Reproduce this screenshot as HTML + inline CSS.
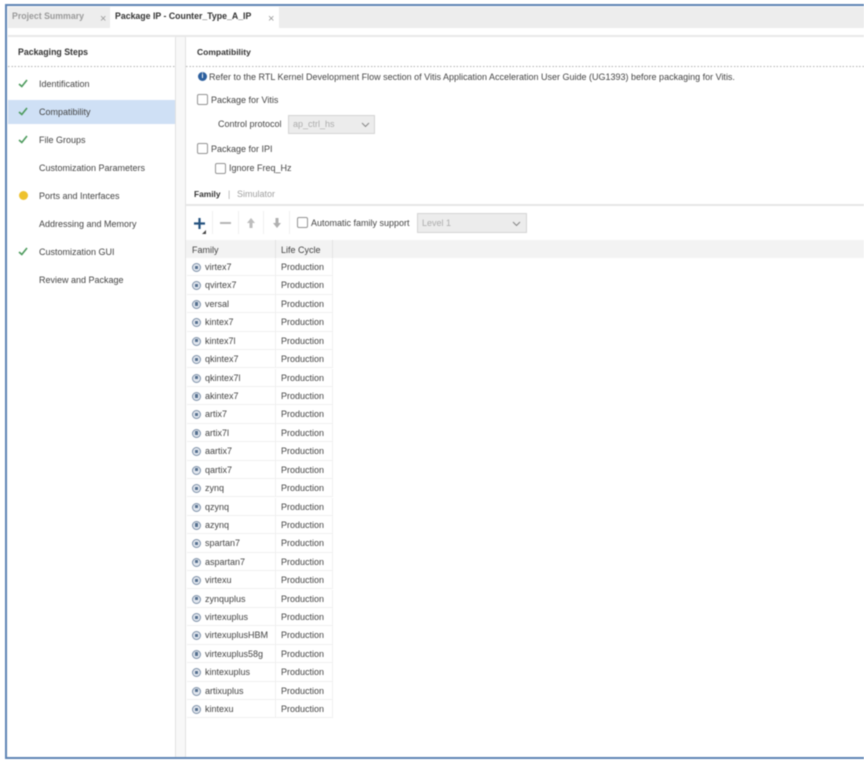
<!DOCTYPE html>
<html><head><meta charset="utf-8">
<style>
html,body{margin:0;padding:0;background:#fff;}
#r{position:relative;width:864px;height:768px;overflow:hidden;background:#fff;font-family:"Liberation Sans",sans-serif;font-size:9px;color:#444;filter:blur(0.42px);}
#r div{position:absolute;white-space:nowrap;box-sizing:border-box;}
.t{line-height:12px;height:12px;}
.b{font-weight:bold;font-size:8.75px;}
.cb{width:11px;height:11px;border:1px solid #949494;border-radius:2px;background:#fff;}
.dd{background:#ececec;border:1px solid #d5d5d5;}
.g{color:#adadad;}
.dot{height:1px;background:repeating-linear-gradient(90deg,#b4b4b4 0,#b4b4b4 1.5px,transparent 1.5px,transparent 3.3px);}
.rw{left:187px;width:146px;height:18.4px;border-bottom:1px solid #f0f0f0;border-right:1px solid #f0f0f0;}
.cd{left:275px;width:1px;height:18.4px;background:#f0f0f0;}
.ic{left:192px;width:9px;height:9px;border-radius:50%;background:#e2e7ee;border:1.3px solid #7d90a8;}
.ic::after{content:"";position:absolute;left:1.6px;top:1.6px;width:3.2px;height:3.2px;background:#55708f;border-radius:0.5px;}
svg{position:absolute;overflow:visible;}
</style></head><body>
<div id="r">
<div style="left:5px;top:4px;width:859px;height:755px;background:#f8f8f8;"></div>
<div style="left:8px;top:7px;width:856px;height:21px;background:#ededed;"></div>
<div style="left:110px;top:7px;width:169px;height:22px;background:#fff;"></div>
<div style="left:8px;top:28px;width:856px;height:8px;background:#fff;"></div>
<div style="left:8px;top:35px;width:856px;height:2px;background:#e8e8e8;"></div>
<div style="left:5px;top:4px;width:859px;height:2px;background:#5f85b5;"></div>
<div style="left:5px;top:4px;width:2px;height:755px;background:#5f85b5;"></div>
<div style="left:5px;top:757px;width:859px;height:2px;background:#5f85b5;"></div>
<div class="t b" style="left:12px;top:10px;color:#9a9a9a;">Project Summary</div>
<div class="t" style="left:100px;top:13px;color:#999;font-size:11px;">×</div>
<div class="t b" style="left:115px;top:10px;color:#333;">Package IP - Counter_Type_A_IP</div>
<div class="t" style="left:268px;top:13px;color:#999;font-size:11px;">×</div>

<div style="left:8px;top:37px;width:168px;height:720px;background:#fff;border-right:1px solid #e2e2e2;"></div>
<div style="left:185px;top:37px;width:679px;height:720px;background:#fff;border-left:1px solid #e2e2e2;"></div>
<div class="t b" style="left:18px;top:46px;color:#333;">Packaging Steps</div>
<div class="t b" style="left:197px;top:46px;color:#333;font-size:8.5px;">Compatibility</div>
<div class="dot" style="left:8px;top:66px;width:167px;"></div>
<div class="dot" style="left:186px;top:66px;width:678px;"></div>
<div style="left:8px;top:100px;width:167px;height:24px;background:#cfe0f5;"></div>

<svg style="left:18px;top:79px" width="10" height="9"><path d="M1 5 L3.8 7.5 L9 1" fill="none" stroke="#4c9a5c" stroke-width="1.6"/></svg>
<svg style="left:18px;top:107px" width="10" height="9"><path d="M1 5 L3.8 7.5 L9 1" fill="none" stroke="#4c9a5c" stroke-width="1.6"/></svg>
<svg style="left:18px;top:135px" width="10" height="9"><path d="M1 5 L3.8 7.5 L9 1" fill="none" stroke="#4c9a5c" stroke-width="1.6"/></svg>
<svg style="left:18px;top:247px" width="10" height="9"><path d="M1 5 L3.8 7.5 L9 1" fill="none" stroke="#4c9a5c" stroke-width="1.6"/></svg>
<div style="left:19px;top:191px;width:9px;height:9px;border-radius:50%;background:#eec22e;"></div>
<div class="t" style="left:39px;top:78px;">Identification</div>
<div class="t" style="left:39px;top:106px;">Compatibility</div>
<div class="t" style="left:39px;top:134px;">File Groups</div>
<div class="t" style="left:39px;top:162px;">Customization Parameters</div>
<div class="t" style="left:39px;top:190px;">Ports and Interfaces</div>
<div class="t" style="left:39px;top:218px;">Addressing and Memory</div>
<div class="t" style="left:39px;top:246px;">Customization GUI</div>
<div class="t" style="left:39px;top:274px;">Review and Package</div>

<div style="left:198px;top:72px;width:9px;height:9px;border-radius:50%;background:#2c5f9e;color:#fff;font-size:7px;line-height:9px;text-align:center;font-weight:bold;">i</div>
<div class="t" style="left:209px;top:71px;">Refer to the RTL Kernel Development Flow section of Vitis Application Acceleration User Guide (UG1393) before packaging for Vitis.</div>
<div class="cb" style="left:197px;top:94px;"></div>
<div class="t" style="left:211px;top:94px;">Package for Vitis</div>
<div class="t" style="left:218px;top:118px;">Control protocol</div>
<div class="dd" style="left:288px;top:115px;width:87px;height:19px;"></div>
<div class="t g" style="left:293px;top:118px;">ap_ctrl_hs</div>
<svg style="left:361px;top:122px" width="9" height="6"><path d="M1 1 L4.5 4.5 L8 1" fill="none" stroke="#888" stroke-width="1"/></svg>
<div class="cb" style="left:197px;top:143px;"></div>
<div class="t" style="left:211px;top:143px;">Package for IPI</div>
<div class="cb" style="left:215px;top:163px;"></div>
<div class="t" style="left:229px;top:162px;">Ignore Freq_Hz</div>
<div class="t b" style="left:194px;top:188px;color:#333;font-size:8.4px;">Family</div>
<div class="t g" style="left:228px;top:188px;">|</div>
<div class="t" style="left:237px;top:188px;color:#a0a0a0;">Simulator</div>
<div style="left:186px;top:204px;width:678px;height:2px;background:#e6e6e6;"></div>

<svg style="left:193px;top:217px" width="13" height="13"><path d="M6.5 1 V12 M1 6.5 H12" stroke="#24527f" stroke-width="2.2" fill="none"/></svg>
<svg style="left:202px;top:230px" width="5" height="5"><path d="M4 0 V4 H0 Z" fill="#444"/></svg>
<div style="left:212px;top:211px;width:1px;height:23px;background:#f0f0f0;"></div>
<div style="left:238px;top:211px;width:1px;height:23px;background:#f0f0f0;"></div>
<div style="left:263px;top:211px;width:1px;height:23px;background:#f0f0f0;"></div>
<div style="left:289px;top:211px;width:1px;height:23px;background:#f0f0f0;"></div>
<div style="left:220px;top:222px;width:11px;height:2px;background:#b5b5b5;"></div>
<svg style="left:246px;top:217px" width="10" height="12"><path d="M5 1 L9 6 H6.5 V11 H3.5 V6 H1 Z" fill="#bdbdbd"/></svg>
<svg style="left:272px;top:217px" width="10" height="12"><path d="M5 11 L9 6 H6.5 V1 H3.5 V6 H1 Z" fill="#b0b0b0"/></svg>
<div class="cb" style="left:297px;top:217px;"></div>
<div class="t" style="left:311px;top:217px;">Automatic family support</div>
<div class="dd" style="left:417px;top:213px;width:110px;height:20px;"></div>
<div class="t g" style="left:422px;top:217px;">Level 1</div>
<svg style="left:512px;top:221px" width="9" height="6"><path d="M1 1 L4.5 4.5 L8 1" fill="none" stroke="#888" stroke-width="1"/></svg>

<div style="left:186px;top:240px;width:678px;height:18px;background:#f3f3f3;"></div>
<div style="left:275px;top:240px;width:1px;height:18px;background:#e4e4e4;"></div>
<div style="left:332px;top:240px;width:1px;height:18px;background:#e4e4e4;"></div>
<div class="t" style="left:192px;top:244px;">Family</div>
<div class="t" style="left:281px;top:244px;">Life Cycle</div>

<div class="rw" style="top:258px"></div><div class="cd" style="top:258px"></div><div class="ic" style="top:263px"></div><div class="t" style="left:205px;top:261px">virtex7</div><div class="t" style="left:281px;top:261px">Production</div>
<div class="rw" style="top:276.4px"></div><div class="cd" style="top:276.4px"></div><div class="ic" style="top:281.4px"></div><div class="t" style="left:205px;top:279.4px">qvirtex7</div><div class="t" style="left:281px;top:279.4px">Production</div>
<div class="rw" style="top:294.8px"></div><div class="cd" style="top:294.8px"></div><div class="ic" style="top:299.8px"></div><div class="t" style="left:205px;top:297.8px">versal</div><div class="t" style="left:281px;top:297.8px">Production</div>
<div class="rw" style="top:313.3px"></div><div class="cd" style="top:313.3px"></div><div class="ic" style="top:318.3px"></div><div class="t" style="left:205px;top:316.3px">kintex7</div><div class="t" style="left:281px;top:316.3px">Production</div>
<div class="rw" style="top:331.7px"></div><div class="cd" style="top:331.7px"></div><div class="ic" style="top:336.7px"></div><div class="t" style="left:205px;top:334.7px">kintex7l</div><div class="t" style="left:281px;top:334.7px">Production</div>
<div class="rw" style="top:350.1px"></div><div class="cd" style="top:350.1px"></div><div class="ic" style="top:355.1px"></div><div class="t" style="left:205px;top:353.1px">qkintex7</div><div class="t" style="left:281px;top:353.1px">Production</div>
<div class="rw" style="top:368.5px"></div><div class="cd" style="top:368.5px"></div><div class="ic" style="top:373.5px"></div><div class="t" style="left:205px;top:371.5px">qkintex7l</div><div class="t" style="left:281px;top:371.5px">Production</div>
<div class="rw" style="top:386.9px"></div><div class="cd" style="top:386.9px"></div><div class="ic" style="top:391.9px"></div><div class="t" style="left:205px;top:389.9px">akintex7</div><div class="t" style="left:281px;top:389.9px">Production</div>
<div class="rw" style="top:405.4px"></div><div class="cd" style="top:405.4px"></div><div class="ic" style="top:410.4px"></div><div class="t" style="left:205px;top:408.4px">artix7</div><div class="t" style="left:281px;top:408.4px">Production</div>
<div class="rw" style="top:423.8px"></div><div class="cd" style="top:423.8px"></div><div class="ic" style="top:428.8px"></div><div class="t" style="left:205px;top:426.8px">artix7l</div><div class="t" style="left:281px;top:426.8px">Production</div>
<div class="rw" style="top:442.2px"></div><div class="cd" style="top:442.2px"></div><div class="ic" style="top:447.2px"></div><div class="t" style="left:205px;top:445.2px">aartix7</div><div class="t" style="left:281px;top:445.2px">Production</div>
<div class="rw" style="top:460.6px"></div><div class="cd" style="top:460.6px"></div><div class="ic" style="top:465.6px"></div><div class="t" style="left:205px;top:463.6px">qartix7</div><div class="t" style="left:281px;top:463.6px">Production</div>
<div class="rw" style="top:479px"></div><div class="cd" style="top:479px"></div><div class="ic" style="top:484px"></div><div class="t" style="left:205px;top:482px">zynq</div><div class="t" style="left:281px;top:482px">Production</div>
<div class="rw" style="top:497.5px"></div><div class="cd" style="top:497.5px"></div><div class="ic" style="top:502.5px"></div><div class="t" style="left:205px;top:500.5px">qzynq</div><div class="t" style="left:281px;top:500.5px">Production</div>
<div class="rw" style="top:515.9px"></div><div class="cd" style="top:515.9px"></div><div class="ic" style="top:520.9px"></div><div class="t" style="left:205px;top:518.9px">azynq</div><div class="t" style="left:281px;top:518.9px">Production</div>
<div class="rw" style="top:534.3px"></div><div class="cd" style="top:534.3px"></div><div class="ic" style="top:539.3px"></div><div class="t" style="left:205px;top:537.3px">spartan7</div><div class="t" style="left:281px;top:537.3px">Production</div>
<div class="rw" style="top:552.7px"></div><div class="cd" style="top:552.7px"></div><div class="ic" style="top:557.7px"></div><div class="t" style="left:205px;top:555.7px">aspartan7</div><div class="t" style="left:281px;top:555.7px">Production</div>
<div class="rw" style="top:571.1px"></div><div class="cd" style="top:571.1px"></div><div class="ic" style="top:576.1px"></div><div class="t" style="left:205px;top:574.1px">virtexu</div><div class="t" style="left:281px;top:574.1px">Production</div>
<div class="rw" style="top:589.6px"></div><div class="cd" style="top:589.6px"></div><div class="ic" style="top:594.6px"></div><div class="t" style="left:205px;top:592.6px">zynquplus</div><div class="t" style="left:281px;top:592.6px">Production</div>
<div class="rw" style="top:608px"></div><div class="cd" style="top:608px"></div><div class="ic" style="top:613px"></div><div class="t" style="left:205px;top:611px">virtexuplus</div><div class="t" style="left:281px;top:611px">Production</div>
<div class="rw" style="top:626.4px"></div><div class="cd" style="top:626.4px"></div><div class="ic" style="top:631.4px"></div><div class="t" style="left:205px;top:629.4px">virtexuplusHBM</div><div class="t" style="left:281px;top:629.4px">Production</div>
<div class="rw" style="top:644.8px"></div><div class="cd" style="top:644.8px"></div><div class="ic" style="top:649.8px"></div><div class="t" style="left:205px;top:647.8px">virtexuplus58g</div><div class="t" style="left:281px;top:647.8px">Production</div>
<div class="rw" style="top:663.2px"></div><div class="cd" style="top:663.2px"></div><div class="ic" style="top:668.2px"></div><div class="t" style="left:205px;top:666.2px">kintexuplus</div><div class="t" style="left:281px;top:666.2px">Production</div>
<div class="rw" style="top:681.7px"></div><div class="cd" style="top:681.7px"></div><div class="ic" style="top:686.7px"></div><div class="t" style="left:205px;top:684.7px">artixuplus</div><div class="t" style="left:281px;top:684.7px">Production</div>
<div class="rw" style="top:700.1px"></div><div class="cd" style="top:700.1px"></div><div class="ic" style="top:705.1px"></div><div class="t" style="left:205px;top:703.1px">kintexu</div><div class="t" style="left:281px;top:703.1px">Production</div>
</div>
</body></html>
